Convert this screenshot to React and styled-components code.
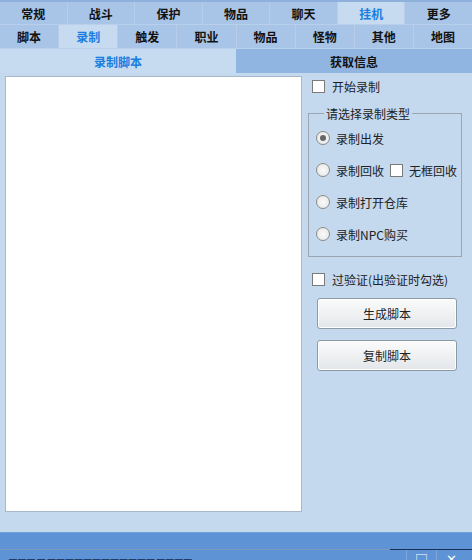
import styled, { createGlobalStyle } from "styled-components";

const GlobalStyle = createGlobalStyle`
    html, body {
        margin: 0;
        padding: 0;
        background: #c4d8ee;
        overflow: hidden;
    }
    * {
        box-sizing: border-box;
    }
`

const mainTabs = ["常规", "战斗", "保护", "物品", "聊天", "挂机", "更多"];
const subTabs = ["脚本", "录制", "触发", "职业", "物品", "怪物", "其他", "地图"];
const radios = ["录制出发", "录制回收", "录制打开仓库", "录制NPC购买"];

const App = () => {
    return (
        <Page>
            <GlobalStyle />
            <TabRow $top>
                {mainTabs.map((t) => (
                    <Tab key={t} $active={t === "挂机"}>{t}</Tab>
                ))}
            </TabRow>
            <TabRow>
                {subTabs.map((t) => (
                    <Tab key={t} $active={t === "录制"}>{t}</Tab>
                ))}
            </TabRow>
            <PageTabs>
                <PageTab $active>录制脚本</PageTab>
                <PageTab>获取信息</PageTab>
            </PageTabs>

            <Content>
                <ScriptBox />
                <Side>
                    <CheckRow>
                        <Box />
                        <span>开始录制</span>
                    </CheckRow>

                    <Group>
                        <Legend>请选择录制类型</Legend>
                        {radios.map((r, i) => (
                            <RadioRow key={r}>
                                <Radio $checked={i === 0} />
                                <span>{r}</span>
                                {i === 1 && (
                                    <Inline>
                                        <Box />
                                        <span>无框回收</span>
                                    </Inline>
                                )}
                            </RadioRow>
                        ))}
                    </Group>

                    <CheckRow $gap>
                        <Box />
                        <span>过验证(出验证时勾选)</span>
                    </CheckRow>

                    <Button>生成脚本</Button>
                    <Button>复制脚本</Button>
                </Side>
            </Content>

            <Footer>
                <FooterLine>
                    <FooterRule />
                </FooterLine>
                <FooterBar>
                    <FooterText>■■■ ■ ■■■■■■■■■■■■ ■■■■</FooterText>
                    <WinButtons>
                        <WinBtn>□</WinBtn>
                        <WinBtn>✕</WinBtn>
                    </WinButtons>
                </FooterBar>
            </Footer>
        </Page>
    )
}

const Page = styled.div`
    width: 472px;
    height: 560px;
    display: flex;
    flex-direction: column;
    font-family: "Noto Sans CJK SC", "Noto Sans", sans-serif;
    background: #c4d8ee;
    overflow: hidden;
`

const TabRow = styled.div`
    display: flex;
    height: ${(p) => (p.$top ? "25px" : "24px")};
    background: #a8c4e6;
    border-top: ${(p) => (p.$top ? "2px solid #8fb0da" : "none")};
    border-bottom: 1px solid #b9d0ec;
`

const Tab = styled.div`
    flex: 1;
    display: flex;
    align-items: center;
    justify-content: center;
    font-size: 12px;
    font-weight: 700;
    color: ${(p) => (p.$active ? "#1a7ee0" : "#111")};
    background: ${(p) => (p.$active ? "#c6daf0" : "transparent")};
    border-right: 1px solid #b7cdea;

    &:last-child {
        border-right: none;
    }
`

const PageTabs = styled.div`
    display: flex;
    height: 24px;
`

const PageTab = styled.div`
    flex: 1;
    display: flex;
    align-items: center;
    justify-content: center;
    font-size: 12px;
    font-weight: 700;
    color: ${(p) => (p.$active ? "#1a7ee0" : "#111")};
    background: ${(p) => (p.$active ? "#c6daf0" : "#90b5e0")};
`

const Content = styled.div`
    flex: 1;
    display: flex;
    padding: 3px 0 20px 5px;
    gap: 6px;
`

const ScriptBox = styled.div`
    width: 297px;
    background: #fff;
    border: 1px solid #a9b8c9;
`

const Side = styled.div`
    flex: 1;
    display: flex;
    flex-direction: column;
    padding-right: 10px;
    font-size: 12px;
    color: #222;
    white-space: nowrap;
`

const CheckRow = styled.div`
    display: flex;
    align-items: center;
    gap: 7px;
    height: 18px;
    margin-top: ${(p) => (p.$gap ? "13px" : "1px")};
    padding-left: 4px;
`

const Box = styled.span`
    width: 13px;
    height: 13px;
    background: #fff;
    border: 1px solid #7a7a7a;
    flex: none;
`

const Group = styled.fieldset`
    margin: 10px 0 0 0;
    padding: 0 0 6px 7px;
    border: 1px solid #9aa6b4;
    display: flex;
    flex-direction: column;
`

const Legend = styled.legend`
    padding: 0 2px;
    margin-left: 8px;
    font-size: 12px;
    line-height: 17px;
    color: #222;
`

const RadioRow = styled.div`
    display: flex;
    align-items: center;
    gap: 6px;
    height: 32px;
`

const Radio = styled.span`
    width: 14px;
    height: 14px;
    border-radius: 50%;
    border: 1px solid #8a8a8a;
    background: radial-gradient(circle, #fafafa 0%, #e4e4e4 100%);
    display: flex;
    align-items: center;
    justify-content: center;
    flex: none;

    &::after {
        content: "";
        width: 6px;
        height: 6px;
        border-radius: 50%;
        background: ${(p) => (p.$checked ? "#666" : "transparent")};
    }
`

const Inline = styled.span`
    display: flex;
    align-items: center;
    gap: 6px;
    margin-left: 0;
`

const Button = styled.div`
    margin: 10px 5px 0 9px;
    height: 31px;
    display: flex;
    align-items: center;
    justify-content: center;
    font-size: 12px;
    color: #222;
    border: 1px solid #8d9aa8;
    border-radius: 3px;
    background: linear-gradient(#fbfbfb, #e3e6ea);
    box-shadow: inset 0 0 0 1px #fff;

    & + & {
        margin-top: 11px;
    }
`

const Footer = styled.div`
    height: 28px;
    background: #5e93d5;
    display: flex;
    flex-direction: column;
    border-top: 1px solid #6f9fd8;
`

const FooterLine = styled.div`
    height: 17px;
    position: relative;
    border-bottom: 1px solid #7c98bd;
`

const FooterRule = styled.div`
    position: absolute;
    right: 0;
    bottom: -1px;
    width: 82px;
    height: 1px;
    background: #17305a;
`

const FooterBar = styled.div`
    flex: 1;
    display: flex;
    align-items: flex-start;
    overflow: hidden;
`

const FooterText = styled.div`
    padding: 5px 0 0 8px;
    font-size: 10px;
    color: #1f3c6a;
    letter-spacing: -1px;
    white-space: nowrap;
    flex: 1;
`

const WinButtons = styled.div`
    display: flex;
    margin-right: 6px;
`

const WinBtn = styled.div`
    width: 30px;
    height: 14px;
    display: flex;
    justify-content: center;
    padding-top: 2px;
    font-size: 13px;
    line-height: 14px;
    color: #fff;
    border-left: 1px solid #7fa6d8;
`

export default App;
